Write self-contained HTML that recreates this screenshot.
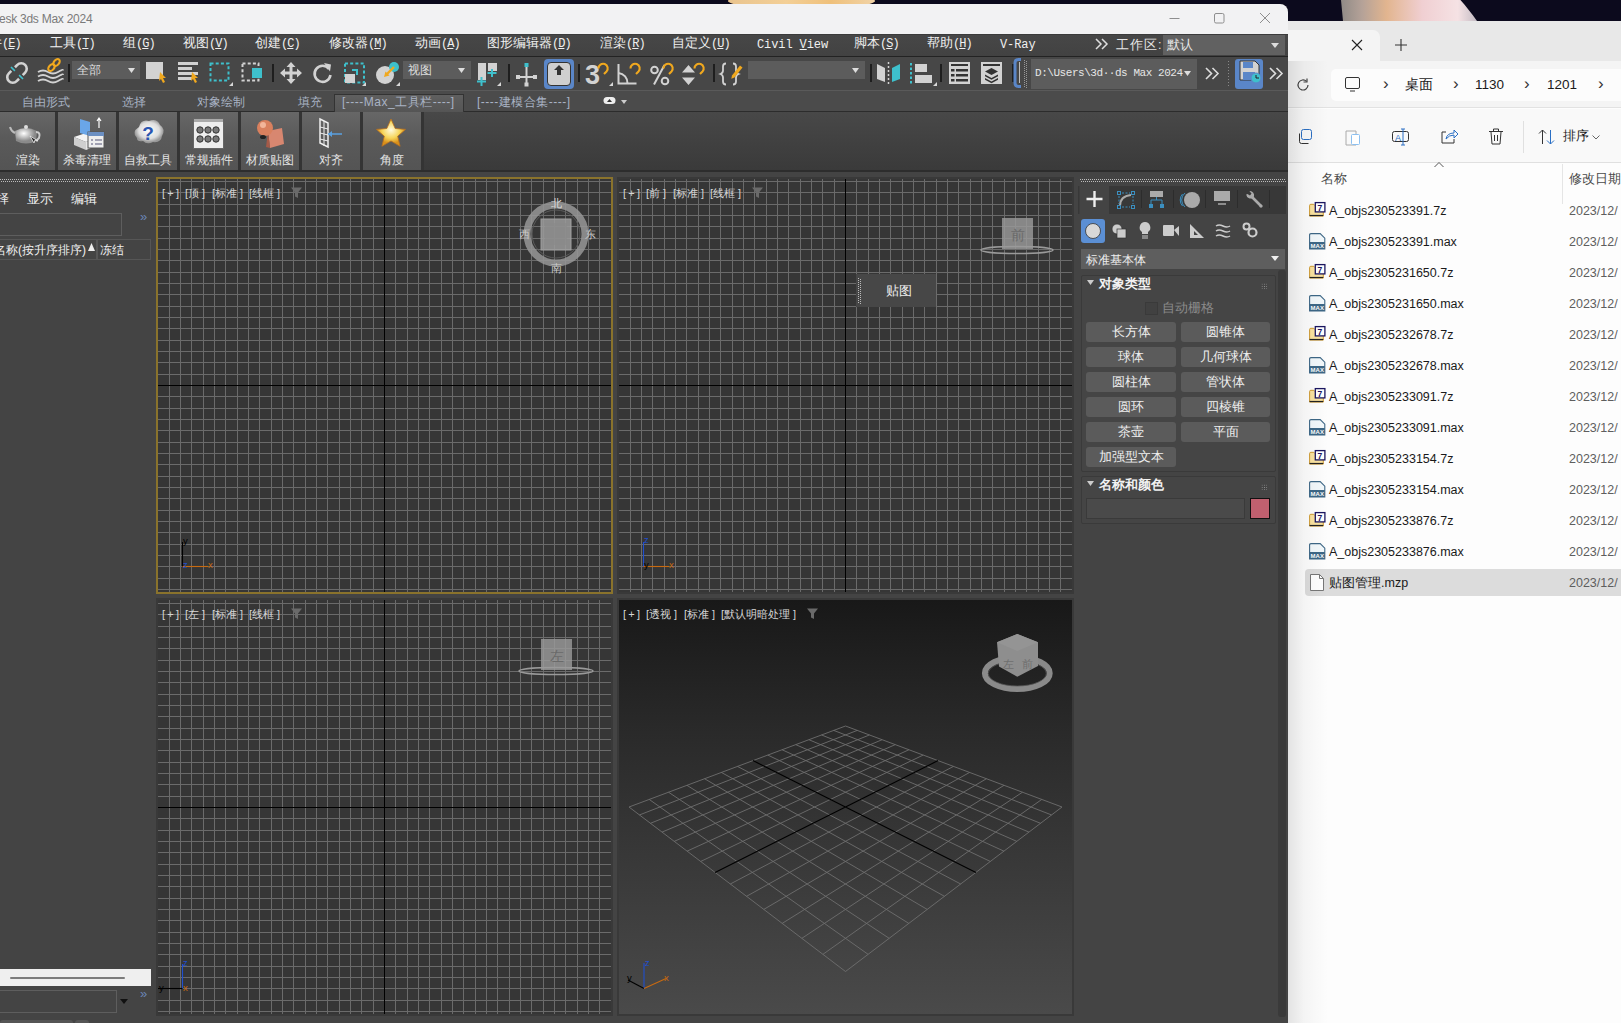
<!DOCTYPE html><html><head><meta charset="utf-8"><style>
*{box-sizing:border-box}
html,body{margin:0;padding:0}
body{width:1621px;height:1023px;overflow:hidden;position:relative;background:#0c0a1d;font-family:"Liberation Sans",sans-serif;font-size:12px;color:#ddd}
.a{position:absolute}
.mono{font-family:"Liberation Mono",monospace}
.t{position:absolute;white-space:nowrap;line-height:1}
svg{position:absolute;overflow:visible}
</style></head><body><div class="a" style="left:728px;top:-6px;width:147px;height:14px;border-radius:50%/60%;background:linear-gradient(90deg,#e9c48e,#f3cf96 40%,#efc07a 70%,#f1d3a6)"></div>
<svg style="left:1330px;top:-40px" width="170" height="62"><defs><linearGradient id="pl" x1="0" x2="1"><stop offset="0" stop-color="#8f8a86"/><stop offset="0.16" stop-color="#b5a298"/><stop offset="0.34" stop-color="#e2b58f"/><stop offset="0.6" stop-color="#f0cfd2"/><stop offset="0.86" stop-color="#f5e2e4"/><stop offset="1" stop-color="#c4bcc4"/></linearGradient></defs><path d="M11 40 C 8 25, 14 10, 40 2 C 70 -6, 110 8, 147 61 L 13 61 Z" fill="url(#pl)"/></svg>
<div class="a" style="left:0;top:4px;width:1288px;height:1019px;background:#444;border-top-right-radius:8px;overflow:hidden">
<div class="a" style="left:0;top:0;width:1288px;height:30px;background:#f2f2f3"></div>
<div class="t" style="left:-1px;top:9px;font-size:12px;letter-spacing:-0.25px;color:#7a7a7a">esk 3ds Max 2024</div>
<svg style="left:1160px;top:0" width="128" height="30" fill="none" stroke="#8e8e8e" stroke-width="1"><path d="M9.5 14.5h10"/><rect x="54.5" y="9.5" width="9.5" height="9.5" rx="1.5"/><path d="M100 9l10 10M110 9l-10 10"/></svg>
<div class="a" style="left:0;top:30px;width:1288px;height:22px;background:linear-gradient(#474747,#424242);border-top:1px solid #3b3b3b"></div>
<div class="a" style="left:0;top:52px;width:1288px;height:1px;background:#232323"></div>
<div class="t" style="left:-11px;top:32px;color:#f0f0f0;white-space:nowrap"><span style="font-size:13px">件</span><span class="mono" style="font-size:12px;letter-spacing:-1px">(<u style="text-underline-offset:1px">E</u>)</span></div>
<div class="t" style="left:50px;top:32px;color:#f0f0f0;white-space:nowrap"><span style="font-size:13px">工具</span><span class="mono" style="font-size:12px;letter-spacing:-1px">(<u style="text-underline-offset:1px">T</u>)</span></div>
<div class="t" style="left:123px;top:32px;color:#f0f0f0;white-space:nowrap"><span style="font-size:13px">组</span><span class="mono" style="font-size:12px;letter-spacing:-1px">(<u style="text-underline-offset:1px">G</u>)</span></div>
<div class="t" style="left:183px;top:32px;color:#f0f0f0;white-space:nowrap"><span style="font-size:13px">视图</span><span class="mono" style="font-size:12px;letter-spacing:-1px">(<u style="text-underline-offset:1px">V</u>)</span></div>
<div class="t" style="left:255px;top:32px;color:#f0f0f0;white-space:nowrap"><span style="font-size:13px">创建</span><span class="mono" style="font-size:12px;letter-spacing:-1px">(<u style="text-underline-offset:1px">C</u>)</span></div>
<div class="t" style="left:329px;top:32px;color:#f0f0f0;white-space:nowrap"><span style="font-size:13px">修改器</span><span class="mono" style="font-size:12px;letter-spacing:-1px">(<u style="text-underline-offset:1px">M</u>)</span></div>
<div class="t" style="left:415px;top:32px;color:#f0f0f0;white-space:nowrap"><span style="font-size:13px">动画</span><span class="mono" style="font-size:12px;letter-spacing:-1px">(<u style="text-underline-offset:1px">A</u>)</span></div>
<div class="t" style="left:487px;top:32px;color:#f0f0f0;white-space:nowrap"><span style="font-size:13px">图形编辑器</span><span class="mono" style="font-size:12px;letter-spacing:-1px">(<u style="text-underline-offset:1px">D</u>)</span></div>
<div class="t" style="left:600px;top:32px;color:#f0f0f0;white-space:nowrap"><span style="font-size:13px">渲染</span><span class="mono" style="font-size:12px;letter-spacing:-1px">(<u style="text-underline-offset:1px">R</u>)</span></div>
<div class="t" style="left:672px;top:32px;color:#f0f0f0;white-space:nowrap"><span style="font-size:13px">自定义</span><span class="mono" style="font-size:12px;letter-spacing:-1px">(<u style="text-underline-offset:1px">U</u>)</span></div>
<div class="t mono" style="left:757px;top:35px;font-size:12px;color:#f0f0f0;letter-spacing:-0.1px">Civil <u style="text-underline-offset:1px">V</u>iew</div>
<div class="t" style="left:854px;top:32px;color:#f0f0f0;white-space:nowrap"><span style="font-size:13px">脚本</span><span class="mono" style="font-size:12px;letter-spacing:-1px">(<u style="text-underline-offset:1px">S</u>)</span></div>
<div class="t" style="left:927px;top:32px;color:#f0f0f0;white-space:nowrap"><span style="font-size:13px">帮助</span><span class="mono" style="font-size:12px;letter-spacing:-1px">(<u style="text-underline-offset:1px">H</u>)</span></div>
<div class="t mono" style="left:1000px;top:35px;font-size:12px;color:#f0f0f0;letter-spacing:-0.1px">V-Ray</div>
<svg style="left:1095px;top:34px" width="13" height="12" ><path d="M1 1l5 5-5 5M7 1l5 5-5 5" fill="none" stroke="#ddd" stroke-width="1.5"/></svg>
<div class="t" style="left:1116px;top:35px;font-size:12.5px;letter-spacing:1px;color:#e6e6e6">工作区:</div>
<div class="a" style="left:1163px;top:31px;width:122px;height:20px;background:#616161"></div>
<div class="t" style="left:1167px;top:35px;font-size:12.5px;color:#e6e6e6">默认</div>
<svg style="left:1271px;top:39px" width="8" height="5"><path d="M0 0h8L4 5z" fill="#ddd"/></svg>
<div class="a" style="left:0;top:53px;width:1288px;height:34px;background:#474747"></div>
<div class="a" style="left:0;top:86px;width:1288px;height:1px;background:#5a5a5a"></div>
<svg style="left:0px;top:51px" width="40" height="36" ><g transform="translate(17,18) rotate(-45)" fill="none" stroke-linecap="butt"><path d="M2.6 -5.5H6A5.5 5.5 0 0 1 6 5.5H2.6M-2.6 5.5H-6A5.5 5.5 0 0 1 -6 -5.5H-2.6" stroke="#d2d2d2" stroke-width="2.6"/><path d="M0 -8.5V-3M0 3V8.5" stroke="#3ec0cc" stroke-width="1.6"/></g></svg>
<svg style="left:30px;top:51px" width="40" height="36" ><g fill="none" stroke="#d2d2d2" stroke-width="1.9"><path d="M8 17q5-3 10 0t10 0 5-1.5"/><path d="M8 21.5q5-3 10 0t10 0 5-1.5"/><path d="M8 26q5-3 10 0t10 0 5-1.5"/></g><g fill="none" stroke="#f0a81e" stroke-width="2.1"><ellipse cx="21.5" cy="12.5" rx="4" ry="2.6" transform="rotate(-50 21.5 12.5)"/><ellipse cx="26.5" cy="7.5" rx="4" ry="2.6" transform="rotate(-50 26.5 7.5)"/></g></svg>
<div class="a" style="left:68px;top:60px;width:2px;height:18px;background:#1e1e1e"></div>
<div class="a" style="left:72px;top:57px;width:68px;height:18px;background:#5c5c5c"></div>
<div class="t" style="left:77px;top:60.0px;font-size:12px;color:#dcdcdc">全部</div>
<svg style="left:128px;top:64px" width="8" height="5" ><path d="M0 0h7L3.5 5z" fill="#ddd"/></svg>
<svg style="left:146px;top:58px" width="22" height="22" ><rect x="0" y="0" width="17" height="17" fill="#d2d2d2"/><path d="M14 10l6 6-3 0 2 4-2 1-2-4-2 2z" fill="#f0a81e"/></svg>
<svg style="left:178px;top:58px" width="24" height="22" ><g fill="#d2d2d2"><rect x="0" y="0" width="20" height="3"/><rect x="0" y="5" width="14" height="3"/><rect x="0" y="10" width="20" height="3"/><rect x="0" y="15" width="14" height="3"/></g><path d="M14 10l6 6-3 0 2 4-2 1-2-4-2 2z" fill="#f0a81e"/></svg>
<svg style="left:208px;top:57px" width="26" height="26" ><rect x="2.5" y="2.5" width="18" height="17" fill="none" stroke="#3ec0cc" stroke-width="2" stroke-dasharray="3 2.2"/></svg>
<svg style="left:229px;top:78px" width="4" height="4" ><path d="M4 0v4h-4z" fill="#d8d8d8"/></svg>
<svg style="left:240px;top:57px" width="26" height="26" ><rect x="2.5" y="2.5" width="16" height="17" fill="none" stroke="#d2d2d2" stroke-width="2" stroke-dasharray="3 2.2"/><rect x="12" y="7" width="10" height="10" fill="#3ec0cc"/></svg>
<div class="a" style="left:272px;top:60px;width:2px;height:18px;background:#1e1e1e"></div>
<svg style="left:279px;top:57px" width="24" height="24" ><g fill="#d2d2d2"><path d="M12 1l4.5 5h-3v4.5h4.5v-3l5 4.5-5 4.5v-3h-4.5v4.5h3l-4.5 5-4.5-5h3v-4.5h-4.5v3l-5-4.5 5-4.5v3h4.5v-4.5h-3z"/></g></svg>
<svg style="left:312px;top:57px" width="22" height="24" ><path d="M17 8a8 8 0 1 0 1.5 6" fill="none" stroke="#d2d2d2" stroke-width="2.6"/><path d="M12 2l7 1.5-1 7z" fill="#d2d2d2"/></svg>
<svg style="left:342px;top:57px" width="26" height="26" ><rect x="3" y="2.5" width="19" height="19" fill="none" stroke="#3ec0cc" stroke-width="2" stroke-dasharray="3 2.2"/><rect x="3" y="13" width="10" height="9" fill="#d2d2d2"/><path d="M10 9h5v5" fill="none" stroke="#3ec0cc" stroke-width="2"/></svg>
<svg style="left:362px;top:78px" width="4" height="4" ><path d="M4 0v4h-4z" fill="#d8d8d8"/></svg>
<svg style="left:375px;top:57px" width="26" height="26" ><circle cx="10" cy="14" r="9" fill="#d2d2d2"/><circle cx="19" cy="6" r="5" fill="#3ec0cc"/><path d="M19 6l-8 8" stroke="#f0a81e" stroke-width="2.4"/><path d="M9 16l1.5-5.5 4 4z" fill="#f0a81e"/></svg>
<svg style="left:396px;top:78px" width="4" height="4" ><path d="M4 0v4h-4z" fill="#d8d8d8"/></svg>
<div class="a" style="left:403px;top:57px;width:68px;height:18px;background:#5c5c5c"></div>
<div class="t" style="left:408px;top:60.0px;font-size:12px;color:#dcdcdc">视图</div>
<svg style="left:458px;top:64px" width="8" height="5" ><path d="M0 0h7L3.5 5z" fill="#ddd"/></svg>
<svg style="left:477px;top:57px" width="26" height="26" ><rect x="1" y="2" width="8" height="17" fill="#d2d2d2"/><rect x="11" y="2" width="9" height="8" fill="#d2d2d2"/><path d="M4.5 16v9M0 20.5h9M15 8v8M10.5 12h9" stroke="#3ec0cc" stroke-width="2"/></svg>
<svg style="left:497px;top:78px" width="4" height="4" ><path d="M4 0v4h-4z" fill="#d8d8d8"/></svg>
<div class="a" style="left:508px;top:60px;width:2px;height:18px;background:#1e1e1e"></div>
<svg style="left:515px;top:57px" width="24" height="26" ><path d="M11.5 4v20M2 16h19" stroke="#d2d2d2" stroke-width="2"/><rect x="9.5" y="2" width="4" height="4" fill="#3ec0cc"/><rect x="1" y="14" width="4" height="4" fill="#d2d2d2"/><rect x="18" y="14" width="4" height="4" fill="#d2d2d2"/><rect x="9.5" y="21.5" width="4" height="4" fill="#d2d2d2"/></svg>
<div class="a" style="left:544px;top:55px;width:30px;height:30px;border-radius:4px;background:#5a86c8"></div>
<div class="a" style="left:547px;top:58px;width:24px;height:24px;border-radius:4px;background:#cfcfcf;border:1px solid #333"></div>
<svg style="left:553px;top:61px" width="12" height="12" ><path d="M6 0l5 5h-3v5h-4v-5h-3z" fill="#333"/></svg>
<div class="a" style="left:578px;top:60px;width:2px;height:18px;background:#1e1e1e"></div>
<svg style="left:580px;top:54px" width="24" height="30" ><text x="5" y="25.5" font-family="Liberation Sans" font-weight="bold" font-size="27" fill="#d2d2d2">3</text></svg>
<svg style="left:596px;top:57px" width="14" height="14" ><path d="M2.5 7.5A4.6 4.6 0 1 1 10.5 10.5L8 13" fill="none" stroke="#f0a81e" stroke-width="2.1" stroke-linecap="butt"/></svg>
<svg style="left:609px;top:78px" width="4" height="4" ><path d="M4 0v4h-4z" fill="#d8d8d8"/></svg>
<svg style="left:616px;top:57px" width="24" height="26" ><path d="M2.5 3v19.5h18" fill="none" stroke="#d2d2d2" stroke-width="2"/><path d="M2.5 12a10 10 0 0 1 9 10.5" fill="none" stroke="#d2d2d2" stroke-width="2"/></svg>
<svg style="left:628px;top:57px" width="14" height="14" ><path d="M2.5 7.5A4.6 4.6 0 1 1 10.5 10.5L8 13" fill="none" stroke="#f0a81e" stroke-width="2.1" stroke-linecap="butt"/></svg>
<svg style="left:649px;top:57px" width="26" height="26" ><circle cx="5.5" cy="9" r="3.3" fill="none" stroke="#d2d2d2" stroke-width="2"/><circle cx="16" cy="20" r="3.3" fill="none" stroke="#d2d2d2" stroke-width="2"/><path d="M5 23.5L15.5 4" stroke="#d2d2d2" stroke-width="2"/></svg>
<svg style="left:661px;top:57px" width="14" height="14" ><path d="M2.5 7.5A4.6 4.6 0 1 1 10.5 10.5L8 13" fill="none" stroke="#f0a81e" stroke-width="2.1" stroke-linecap="butt"/></svg>
<svg style="left:681px;top:59px" width="16" height="24" ><path d="M7.5 2l6.5 7.5h-13zM7.5 22l6.5-7.5h-13z" fill="#d2d2d2"/></svg>
<svg style="left:692px;top:57px" width="14" height="14" ><path d="M2.5 7.5A4.6 4.6 0 1 1 10.5 10.5L8 13" fill="none" stroke="#f0a81e" stroke-width="2.1" stroke-linecap="butt"/></svg>
<div class="a" style="left:713px;top:60px;width:2px;height:18px;background:#1e1e1e"></div>
<svg style="left:719px;top:57px" width="28" height="26" ><path d="M7 2.5q-3 0-3 3v4q0 2.5-2.5 3.5 2.5 1 2.5 3.5v4q0 3 3 3M14 2.5q3 0 3 3v4q0 2.5 2.5 3.5-2.5 1-2.5 3.5v4q0 3-3 3" fill="none" stroke="#d2d2d2" stroke-width="1.8"/><path d="M13 14.5L21 4.5l2.5 2L15.5 16.5l-3.2 1.3z" fill="#f0a81e"/></svg>
<div class="a" style="left:748px;top:57px;width:117px;height:18px;background:#5c5c5c"></div>
<svg style="left:852px;top:64px" width="8" height="5" ><path d="M0 0h7L3.5 5z" fill="#ddd"/></svg>
<div class="a" style="left:870px;top:60px;width:2px;height:18px;background:#1e1e1e"></div>
<svg style="left:876px;top:58px" width="26" height="22" ><path d="M1 2l8 4v14l-8-3z" fill="#d2d2d2"/><path d="M24 2l-8 4v14l8-3z" fill="#3ec0cc"/><path d="M12.5 0v22" stroke="#d2d2d2" stroke-width="1.5" stroke-dasharray="2 2"/></svg>
<svg style="left:910px;top:58px" width="26" height="26" ><path d="M1 1v22" stroke="#3ec0cc" stroke-width="2" stroke-dasharray="2.5 2"/><rect x="5" y="2" width="12" height="8" fill="#d2d2d2"/><rect x="5" y="13" width="17" height="8" fill="#d2d2d2"/></svg>
<svg style="left:933px;top:78px" width="4" height="4" ><path d="M4 0v4h-4z" fill="#d8d8d8"/></svg>
<div class="a" style="left:940px;top:60px;width:2px;height:18px;background:#1e1e1e"></div>
<svg style="left:948px;top:57px" width="24" height="26" ><rect x="1" y="1" width="21" height="22" fill="#d2d2d2"/><g fill="#333"><rect x="3" y="3" width="17" height="2"/><rect x="3" y="8" width="3.5" height="2.5"/><rect x="8" y="8" width="12" height="2.5"/><rect x="3" y="13" width="3.5" height="2.5"/><rect x="8" y="13" width="12" height="2.5"/><rect x="3" y="18" width="3.5" height="2.5"/><rect x="8" y="18" width="12" height="2.5"/></g></svg>
<svg style="left:980px;top:57px" width="24" height="26" ><rect x="1" y="1" width="21" height="22" fill="#d2d2d2"/><g fill="#333"><rect x="3" y="3" width="17" height="2"/><path d="M11.5 7l6.5 3.5-6.5 3.5-6.5-3.5z"/><path d="M5 13.5l6.5 3.5 6.5-3.5v1.8l-6.5 3.5-6.5-3.5z"/><path d="M5 17l6.5 3.5 6.5-3.5v1.8l-6.5 3.5-6.5-3.5z"/></g></svg>
<div class="a" style="left:1012px;top:60px;width:2px;height:18px;background:#1e1e1e"></div>
<svg style="left:1013px;top:54px" width="10" height="32" ><path d="M8 1.5H5.5Q2 1.5 2 5v20q0 3.5 3.5 3.5H8" fill="none" stroke="#5a86c8" stroke-width="3"/><path d="M6.5 4v21" stroke="#ddd" stroke-width="0.8"/></svg>
<div class="a" style="left:1024px;top:56px;width:1px;height:28px;background-image:linear-gradient(#999 1px,transparent 1px);background-size:1px 2px"></div>
<div class="a" style="left:1026px;top:57px;width:1px;height:28px;background-image:linear-gradient(#999 1px,transparent 1px);background-size:1px 2px"></div>
<div class="a" style="left:1031px;top:55px;width:166px;height:30px;background:#5c5c5c"></div>
<div class="t mono" style="left:1035px;top:64px;font-size:11px;color:#e6e6e6;letter-spacing:-0.45px">D:\Users\3d&#183;&#183;ds Max 2024</div>
<svg style="left:1184px;top:67px" width="8" height="5" ><path d="M0 0h7L3.5 5z" fill="#ddd"/></svg>
<svg style="left:1205px;top:63px" width="14" height="13" ><path d="M1 1l5.5 5.5-5.5 5.5M7.5 1l5.5 5.5-5.5 5.5" fill="none" stroke="#ddd" stroke-width="1.6"/></svg>
<div class="a" style="left:1227px;top:56px;width:3px;height:28px;background-image:radial-gradient(#888 0.6px,transparent 0.7px);background-size:3px 3px"></div>
<div class="a" style="left:1235px;top:55px;width:28px;height:30px;border-radius:3px;background:#5a86c8"></div>
<svg style="left:1239px;top:56px" width="22" height="24" ><path d="M1 1h15l4 4v15h-19z" fill="#d2d2d2" stroke="#333" stroke-width="1"/><rect x="4" y="2" width="10" height="6" fill="#5a86c8"/><rect x="4" y="12" width="12" height="8" fill="#5a86c8"/><circle cx="17" cy="18" r="5" fill="#3ec0cc" stroke="#5a86c8"/><path d="M17 15v3h3" stroke="#222" fill="none"/></svg>
<svg style="left:1269px;top:63px" width="14" height="13" ><path d="M1 1l5.5 5.5-5.5 5.5M7.5 1l5.5 5.5-5.5 5.5" fill="none" stroke="#ddd" stroke-width="1.6"/></svg>
<div class="a" style="left:0;top:87px;width:1288px;height:20px;background:#4b4b4b"></div>
<div class="a" style="left:0;top:107px;width:1288px;height:1px;background:#2c2c2c"></div>
<div class="t" style="left:22px;top:92px;font-size:12px;color:#a9b3c4">自由形式</div>
<div class="t" style="left:122px;top:92px;font-size:12px;color:#a9b3c4">选择</div>
<div class="t" style="left:197px;top:92px;font-size:12px;color:#a9b3c4">对象绘制</div>
<div class="t" style="left:298px;top:92px;font-size:12px;color:#a9b3c4">填充</div>
<div class="a" style="left:334px;top:90px;width:130px;height:18px;background:linear-gradient(#5f5f5f,#555);border:1px solid #333;border-bottom:none"></div>
<div class="t" style="left:342px;top:92px;font-size:12px;letter-spacing:0.5px;color:#a9b3c4">[----Max_工具栏----]</div>
<div class="t" style="left:477px;top:92px;font-size:12px;letter-spacing:0.5px;color:#a9b3c4">[----建模合集----]</div>
<svg style="left:603px;top:92px" width="14" height="10" ><rect x="0.5" y="1" width="12" height="7" rx="3.5" fill="#eee"/><path d="M4 6l2.5-3 2.5 3z" fill="#333"/></svg>
<svg style="left:621px;top:96px" width="6" height="4" ><path d="M0 0h6L3 4z" fill="#ccc"/></svg>
<div class="a" style="left:0;top:108px;width:1288px;height:58px;background:linear-gradient(#484848,#3a3a3a)"></div>
<div class="a" style="left:0;top:108px;width:424px;height:58px;background:#343434"></div>
<div class="a" style="left:0;top:166px;width:1288px;height:2px;background:#2d2d2d"></div>
<div class="a" style="left:0px;top:108px;width:55px;height:58px;background:linear-gradient(#676767,#5a5a5a 45%,#545454)"></div>
<div class="t" style="left:0px;width:55px;text-align:center;top:150px;font-size:12px;color:#e4e4e4">渲染</div>
<div class="a" style="left:58px;top:108px;width:58px;height:58px;background:linear-gradient(#676767,#5a5a5a 45%,#545454)"></div>
<div class="t" style="left:58px;width:58px;text-align:center;top:150px;font-size:12px;color:#e4e4e4">杀毒清理</div>
<div class="a" style="left:119px;top:108px;width:58px;height:58px;background:linear-gradient(#676767,#5a5a5a 45%,#545454)"></div>
<div class="t" style="left:119px;width:58px;text-align:center;top:150px;font-size:12px;color:#e4e4e4">自救工具</div>
<div class="a" style="left:180px;top:108px;width:58px;height:58px;background:linear-gradient(#676767,#5a5a5a 45%,#545454)"></div>
<div class="t" style="left:180px;width:58px;text-align:center;top:150px;font-size:12px;color:#e4e4e4">常规插件</div>
<div class="a" style="left:241px;top:108px;width:58px;height:58px;background:linear-gradient(#676767,#5a5a5a 45%,#545454)"></div>
<div class="t" style="left:241px;width:58px;text-align:center;top:150px;font-size:12px;color:#e4e4e4">材质贴图</div>
<div class="a" style="left:302px;top:108px;width:58px;height:58px;background:linear-gradient(#676767,#5a5a5a 45%,#545454)"></div>
<div class="t" style="left:302px;width:58px;text-align:center;top:150px;font-size:12px;color:#e4e4e4">对齐</div>
<div class="a" style="left:363px;top:108px;width:58px;height:58px;background:linear-gradient(#676767,#5a5a5a 45%,#545454)"></div>
<div class="t" style="left:363px;width:58px;text-align:center;top:150px;font-size:12px;color:#e4e4e4">角度</div>
<svg style="left:10px;top:115px" width="32" height="30" ><defs><radialGradient id="tp" cx="0.4" cy="0.35"><stop offset="0" stop-color="#fff"/><stop offset="1" stop-color="#8a8a8a"/></radialGradient></defs><path d="M5 12q11-6 22 0l-1 10q-10 5-20 0z" fill="url(#tp)"/><path d="M26 13q5 0 3 6l-3 3" fill="none" stroke="#ccc" stroke-width="2"/><path d="M5 14q-4-2-5-6" stroke="#bbb" stroke-width="2" fill="none"/><circle cx="16" cy="8" r="2" fill="#ddd"/><path d="M20 17l4 7 1-3 3 1z" fill="#222" stroke="#eee" stroke-width="0.8"/></svg>
<svg style="left:71px;top:113px" width="34" height="34" ><path d="M3 20l12-4 12 4-12 5z" fill="#f4f4f4"/><path d="M3 20v8l12 5v-8z" fill="#cfcfcf"/><path d="M15 25v8l12-5v-8z" fill="#e6e6e6"/><path d="M9 2l10 3v14l-10-3z" fill="#6aa6e8"/><rect x="17" y="15" width="16" height="16" fill="#eee" stroke="#555"/><rect x="17" y="15" width="16" height="4" fill="#6b8fc2"/><path d="M20 23h2M24 23h7M20 27h2M24 27h7" stroke="#557"/><path d="M28 2v9M26 4l2-3 2 3" stroke="#fff" stroke-width="1.2" fill="none"/></svg>
<svg style="left:131px;top:114px" width="34" height="30" ><defs><radialGradient id="cl" cx="0.5" cy="0.45"><stop offset="0" stop-color="#fff"/><stop offset="0.7" stop-color="#ddd"/><stop offset="1" stop-color="#999"/></radialGradient></defs><path d="M6 20q-6-6 2-11q2-8 10-6q8-3 11 4q6 4 2 11q-1 7-9 6q-6 3-10-1q-6 1-6-3z" fill="url(#cl)"/><text x="17" y="22" text-anchor="middle" font-family="Liberation Sans" font-weight="bold" font-size="19" fill="#2a55b0">?</text></svg>
<svg style="left:193px;top:114px" width="32" height="32" ><rect x="0.5" y="0.5" width="30" height="30" fill="#eee" stroke="#666"/><rect x="1" y="1" width="29" height="3" fill="#aaa"/><circle cx="7" cy="12" r="3.2" fill="#777" stroke="#333"/><circle cx="7" cy="21" r="3.2" fill="#777" stroke="#333"/><circle cx="15" cy="12" r="3.2" fill="#777" stroke="#333"/><circle cx="15" cy="21" r="3.2" fill="#777" stroke="#333"/><circle cx="23" cy="12" r="3.2" fill="#777" stroke="#333"/><circle cx="23" cy="21" r="3.2" fill="#777" stroke="#333"/></svg>
<svg style="left:253px;top:113px" width="34" height="34" ><path d="M15 14l14-3 2 16-14 4z" fill="#d88770"/><path d="M15 14l-2 16 4 1z" fill="#a55a48"/><circle cx="12" cy="11" r="8" fill="#d9805e"/><circle cx="10" cy="8" r="3" fill="#f2b59a"/><ellipse cx="10" cy="20" rx="3" ry="2" fill="#222"/></svg>
<svg style="left:317px;top:114px" width="30" height="30" ><path d="M3 1l8 4v24l-8-4z" fill="none" stroke="#eee" stroke-width="1.5"/><path d="M3 9l8 2M3 15l8 2M3 21l8 2M7 3v25" stroke="#eee" stroke-width="1"/><path d="M11 16h14" stroke="#5aa0e0" stroke-width="1.5"/><path d="M11 16l4-3v6z" fill="#5aa0e0"/></svg>
<svg style="left:376px;top:114px" width="30" height="30" ><defs><radialGradient id="st" cx="0.5" cy="0.4"><stop offset="0" stop-color="#fffbe0"/><stop offset="0.6" stop-color="#f6d55a"/><stop offset="1" stop-color="#d9901a"/></radialGradient></defs><path d="M15 1l4.2 9.5 10.3 0.9-7.8 6.8 2.4 10.1L15 23l-9.1 5.3 2.4-10.1L0.5 11.4l10.3-0.9z" fill="url(#st)" stroke="#b87020" stroke-width="0.8"/></svg>
<div class="a" style="left:0;top:175px;width:149px;height:1px;background-image:linear-gradient(90deg,#bdbdbd 1px,transparent 1px);background-size:2px 1px"></div>
<div class="a" style="left:1px;top:177px;width:148px;height:1px;background-image:linear-gradient(90deg,#bdbdbd 1px,transparent 1px);background-size:2px 1px"></div>
<div class="t" style="left:-17px;top:189px;font-size:12.5px;color:#f0f0f0">选择</div>
<div class="t" style="left:27px;top:189px;font-size:12.5px;color:#f0f0f0">显示</div>
<div class="t" style="left:71px;top:189px;font-size:12.5px;color:#f0f0f0">编辑</div>
<div class="a" style="left:-1px;top:209px;width:123px;height:23px;border:1px solid #5e5e5e"></div>
<div class="t" style="left:140px;top:206px;font-size:13px;color:#6b86b5">&#187;</div>
<div class="a" style="left:-1px;top:235px;width:98px;height:21px;border:1px solid #565656"></div>
<div class="a" style="left:97px;top:235px;width:54px;height:21px;border:1px solid #565656"></div>
<div class="t" style="left:-6px;top:240px;font-size:12px;color:#f0f0f0">名称(按升序排序)</div>
<svg style="left:88px;top:239px" width="7" height="8" ><path d="M3.5 0l3.5 8h-7z" fill="#eee"/></svg>
<div class="t" style="left:100px;top:240px;font-size:12px;color:#f0f0f0">冻结</div>
<div class="a" style="left:0;top:965px;width:151px;height:17px;background:#efefef"></div>
<div class="a" style="left:10px;top:973px;width:115px;height:2px;background:#7c7c7c;border-radius:1px"></div>
<div class="a" style="left:-1px;top:986px;width:118px;height:23px;border:1px solid #5e5e5e"></div>
<svg style="left:120px;top:995px" width="8" height="5" ><path d="M0 0h8L4 5z" fill="#111"/></svg>
<div class="t" style="left:140px;top:983px;font-size:13px;color:#6b86b5">&#187;</div>
<div class="a" style="left:0;top:1016px;width:73px;height:6px;border-radius:3px;background:#555"></div>
<div class="a" style="left:75px;top:1016px;width:14px;height:6px;border-radius:3px;background:#555"></div>
<div class="a" style="left:156px;top:173px;width:457px;height:417px;border:2px solid #8a732c;background:#363636"></div>
<svg style="left:158px;top:175px" width="453" height="413"><path d="M11.5 0V413M22.5 0V413M0 2.5H453M33.5 0V413M0 13.5H453M45.5 0V413M0 25.5H453M56.5 0V413M0 36.5H453M67.5 0V413M0 47.5H453M79.5 0V413M0 59.5H453M90.5 0V413M0 70.5H453M101.5 0V413M0 81.5H453M113.5 0V413M0 93.5H453M124.5 0V413M0 104.5H453M135.5 0V413M0 115.5H453M147.5 0V413M0 127.5H453M158.5 0V413M0 138.5H453M169.5 0V413M0 149.5H453M181.5 0V413M0 161.5H453M192.5 0V413M0 172.5H453M203.5 0V413M0 183.5H453M215.5 0V413M0 195.5H453M237.5 0V413M0 217.5H453M249.5 0V413M0 229.5H453M260.5 0V413M0 240.5H453M271.5 0V413M0 251.5H453M283.5 0V413M0 263.5H453M294.5 0V413M0 274.5H453M305.5 0V413M0 285.5H453M317.5 0V413M0 297.5H453M328.5 0V413M0 308.5H453M339.5 0V413M0 319.5H453M351.5 0V413M0 331.5H453M362.5 0V413M0 342.5H453M373.5 0V413M0 353.5H453M385.5 0V413M0 365.5H453M396.5 0V413M0 376.5H453M407.5 0V413M0 387.5H453M419.5 0V413M0 399.5H453M430.5 0V413M0 410.5H453M441.5 0V413" stroke="#6b6b6b" stroke-width="1" shape-rendering="crispEdges"/><path d="M226.5 0V413M0 206.5H453" stroke="#000" stroke-width="1" shape-rendering="crispEdges"/></svg>
<div class="a" style="left:617px;top:173px;width:457px;height:417px;border:2px solid #393939;background:#363636"></div>
<svg style="left:619px;top:175px" width="453" height="413"><path d="M11.5 0V413M22.5 0V413M0 2.5H453M33.5 0V413M0 13.5H453M45.5 0V413M0 25.5H453M56.5 0V413M0 36.5H453M67.5 0V413M0 47.5H453M79.5 0V413M0 59.5H453M90.5 0V413M0 70.5H453M101.5 0V413M0 81.5H453M113.5 0V413M0 93.5H453M124.5 0V413M0 104.5H453M135.5 0V413M0 115.5H453M147.5 0V413M0 127.5H453M158.5 0V413M0 138.5H453M169.5 0V413M0 149.5H453M181.5 0V413M0 161.5H453M192.5 0V413M0 172.5H453M203.5 0V413M0 183.5H453M215.5 0V413M0 195.5H453M237.5 0V413M0 217.5H453M249.5 0V413M0 229.5H453M260.5 0V413M0 240.5H453M271.5 0V413M0 251.5H453M283.5 0V413M0 263.5H453M294.5 0V413M0 274.5H453M305.5 0V413M0 285.5H453M317.5 0V413M0 297.5H453M328.5 0V413M0 308.5H453M339.5 0V413M0 319.5H453M351.5 0V413M0 331.5H453M362.5 0V413M0 342.5H453M373.5 0V413M0 353.5H453M385.5 0V413M0 365.5H453M396.5 0V413M0 376.5H453M407.5 0V413M0 387.5H453M419.5 0V413M0 399.5H453M430.5 0V413M0 410.5H453M441.5 0V413" stroke="#6b6b6b" stroke-width="1" shape-rendering="crispEdges"/><path d="M226.5 0V413M0 206.5H453" stroke="#000" stroke-width="1" shape-rendering="crispEdges"/></svg>
<div class="a" style="left:156px;top:594px;width:457px;height:418px;border:2px solid #393939;background:#363636"></div>
<svg style="left:158px;top:596px" width="453" height="414"><path d="M11.5 0V414M22.5 0V414M0 3.5H453M33.5 0V414M0 14.5H453M45.5 0V414M0 26.5H453M56.5 0V414M0 37.5H453M67.5 0V414M0 48.5H453M79.5 0V414M0 60.5H453M90.5 0V414M0 71.5H453M101.5 0V414M0 82.5H453M113.5 0V414M0 94.5H453M124.5 0V414M0 105.5H453M135.5 0V414M0 116.5H453M147.5 0V414M0 128.5H453M158.5 0V414M0 139.5H453M169.5 0V414M0 150.5H453M181.5 0V414M0 162.5H453M192.5 0V414M0 173.5H453M203.5 0V414M0 184.5H453M215.5 0V414M0 196.5H453M237.5 0V414M0 218.5H453M249.5 0V414M0 230.5H453M260.5 0V414M0 241.5H453M271.5 0V414M0 252.5H453M283.5 0V414M0 264.5H453M294.5 0V414M0 275.5H453M305.5 0V414M0 286.5H453M317.5 0V414M0 298.5H453M328.5 0V414M0 309.5H453M339.5 0V414M0 320.5H453M351.5 0V414M0 332.5H453M362.5 0V414M0 343.5H453M373.5 0V414M0 354.5H453M385.5 0V414M0 366.5H453M396.5 0V414M0 377.5H453M407.5 0V414M0 388.5H453M419.5 0V414M0 400.5H453M430.5 0V414M0 411.5H453M441.5 0V414" stroke="#6b6b6b" stroke-width="1" shape-rendering="crispEdges"/><path d="M226.5 0V414M0 207.5H453" stroke="#000" stroke-width="1" shape-rendering="crispEdges"/></svg>
<div class="a" style="left:617px;top:594px;width:457px;height:418px;border:2px solid #393939;background:linear-gradient(#181818,#2a2a2a 32%,#4a4a4a 100%)"></div>
<svg style="left:617px;top:594px" width="457" height="417"><path d="M228.50 128.00L12.00 209.00M228.50 128.00L445.00 209.00M240.25 132.40L22.46 216.95M216.75 132.40L434.54 216.95M252.45 136.96L33.45 225.30M204.55 136.96L423.55 225.30M265.11 141.70L45.02 234.09M191.89 141.70L411.98 234.09M278.27 146.62L57.21 243.35M178.73 146.62L399.79 243.35M291.95 151.74L70.08 253.13M165.05 151.74L386.92 253.13M306.19 157.07L83.68 263.46M150.81 157.07L373.32 263.46M336.48 168.40L113.33 285.99M120.52 168.40L343.67 285.99M352.60 174.43L129.54 298.31M104.40 174.43L327.46 298.31M369.45 180.73L146.79 311.42M87.55 180.73L310.21 311.42M387.05 187.32L165.19 325.39M69.95 187.32L291.81 325.39M405.47 194.21L184.84 340.33M51.53 194.21L272.16 340.33M424.77 201.43L205.90 356.33M32.23 201.43L251.10 356.33M445.00 209.00L228.50 373.50M12.00 209.00L228.50 373.50" stroke="#6e6e6e" stroke-width="0.9" fill="none"/><path d="M321.02 162.61L98.07 274.40M135.98 162.61L358.93 274.40" stroke="#000" stroke-width="1.1" fill="none"/></svg>
<div class="t" style="left:162px;top:184px;font-size:11px;color:#d6d6d6">[&thinsp;+&thinsp;]</div>
<div class="t" style="left:185px;top:184px;font-size:11px;color:#d6d6d6">[顶&nbsp;]</div>
<div class="t" style="left:212px;top:184px;font-size:11px;color:#d6d6d6">[标准&nbsp;]</div>
<div class="t" style="left:249px;top:184px;font-size:11px;color:#d6d6d6">[线框&nbsp;]</div>
<svg style="left:291px;top:183px" width="12" height="12" ><path d="M0 0.5h11l-4 5v5.5l-3-1.5v-4z" fill="#6a6a6a"/></svg>
<div class="t" style="left:623px;top:184px;font-size:11px;color:#d6d6d6">[&thinsp;+&thinsp;]</div>
<div class="t" style="left:646px;top:184px;font-size:11px;color:#d6d6d6">[前&nbsp;]</div>
<div class="t" style="left:673px;top:184px;font-size:11px;color:#d6d6d6">[标准&nbsp;]</div>
<div class="t" style="left:710px;top:184px;font-size:11px;color:#d6d6d6">[线框&nbsp;]</div>
<svg style="left:752px;top:183px" width="12" height="12" ><path d="M0 0.5h11l-4 5v5.5l-3-1.5v-4z" fill="#6a6a6a"/></svg>
<div class="t" style="left:162px;top:605px;font-size:11px;color:#d6d6d6">[&thinsp;+&thinsp;]</div>
<div class="t" style="left:185px;top:605px;font-size:11px;color:#d6d6d6">[左&nbsp;]</div>
<div class="t" style="left:212px;top:605px;font-size:11px;color:#d6d6d6">[标准&nbsp;]</div>
<div class="t" style="left:249px;top:605px;font-size:11px;color:#d6d6d6">[线框&nbsp;]</div>
<svg style="left:291px;top:604px" width="12" height="12" ><path d="M0 0.5h11l-4 5v5.5l-3-1.5v-4z" fill="#6a6a6a"/></svg>
<div class="t" style="left:623px;top:605px;font-size:11px;color:#d6d6d6">[&thinsp;+&thinsp;]</div>
<div class="t" style="left:646px;top:605px;font-size:11px;color:#d6d6d6">[透视&nbsp;]</div>
<div class="t" style="left:684px;top:605px;font-size:11px;color:#d6d6d6">[标准&nbsp;]</div>
<div class="t" style="left:721px;top:605px;font-size:11px;color:#d6d6d6">[默认明暗处理&nbsp;]</div>
<svg style="left:807px;top:604px" width="12" height="12" ><path d="M0 0.5h11l-4 5v5.5l-3-1.5v-4z" fill="#6a6a6a"/></svg>
<svg style="left:520px;top:194px" width="72" height="72" ><circle cx="36" cy="36" r="29" fill="none" stroke="#969696" stroke-width="7" stroke-opacity="0.85"/><circle cx="36" cy="36" r="24" fill="none" stroke="#5a5a5a" stroke-width="1"/><rect x="21" y="21" width="30" height="31" fill="#9a9a9a" fill-opacity="0.85" stroke="#a0a0a0"/><rect x="25" y="25" width="22" height="22" fill="#8a8a8a" fill-opacity="0.7"/><text x="36" y="9" text-anchor="middle" font-size="11" fill="#ddd">北</text><text x="4" y="40" text-anchor="middle" font-size="11" fill="#ccc">西</text><text x="70" y="40" text-anchor="middle" font-size="11" fill="#ccc">东</text><text x="36" y="74" text-anchor="middle" font-size="11" fill="#ccc">南</text></svg>
<svg style="left:975px;top:210px" width="84" height="44" ><rect x="27" y="4" width="31" height="31" fill="#9a9a9a" fill-opacity="0.82"/><text x="42.5" y="26" text-anchor="middle" font-size="14" fill="#6a6a6a">前</text><ellipse cx="42" cy="36" rx="36" ry="3.5" fill="none" stroke="#9a9a9a" stroke-width="1.5"/></svg>
<svg style="left:515px;top:631px" width="84" height="44" ><rect x="26" y="4" width="31" height="31" fill="#9a9a9a" fill-opacity="0.82"/><text x="41.5" y="26" text-anchor="middle" font-size="14" fill="#6a6a6a">左</text><ellipse cx="41" cy="36" rx="37" ry="3.5" fill="none" stroke="#9a9a9a" stroke-width="1.5"/></svg>
<svg style="left:970px;top:616px" width="100" height="80" ><ellipse cx="47.3" cy="53.2" rx="32.4" ry="15.8" fill="none" stroke="#8a8a8a" stroke-width="6"/><ellipse cx="47.3" cy="53.5" rx="29" ry="12.5" fill="none" stroke="#555" stroke-width="0.8"/><path d="M47.3 14L68 22.3V46L47.3 56.7L29 46.5L27 22.3z" fill="#8e8e8e"/><path d="M47.3 14L68 22.3L47.3 31L27 22.3z" fill="#949494"/><text x="38" y="48" text-anchor="middle" font-size="11" fill="#6e6e6e">左</text><text x="57" y="48" text-anchor="middle" font-size="11" fill="#6e6e6e">前</text></svg>
<div class="a" style="left:856px;top:270px;width:80px;height:33px;background:#474747"></div>
<div class="a" style="left:858px;top:274px;width:1px;height:26px;background-image:linear-gradient(#bbb 1px,transparent 1px);background-size:1px 2px"></div>
<div class="a" style="left:860px;top:275px;width:1px;height:26px;background-image:linear-gradient(#bbb 1px,transparent 1px);background-size:1px 2px"></div>
<div class="t" style="left:886px;top:281px;font-size:12.5px;color:#eee">贴图</div>
<svg style="left:150px;top:526px" width="60" height="50"><path d="M32.5 12L32.5 37" stroke="#000" stroke-width="1.1" fill="none"/><path d="M32.5 36.5L58 36.5" stroke="#c86a10" stroke-width="1.1" fill="none"/><text x="33" y="14" font-size="9.5" font-family="Liberation Sans" fill="#000">y</text><text x="33" y="38" font-size="9.5" font-family="Liberation Sans" fill="#1f4fd0">z</text><text x="58" y="38" font-size="9.5" font-family="Liberation Sans" fill="#c86a10">x</text></svg>
<svg style="left:610px;top:526px" width="60" height="50"><path d="M33.5 12L33.5 37" stroke="#1f4fd0" stroke-width="1.1" fill="none"/><path d="M33.5 36.5L59 36.5" stroke="#c86a10" stroke-width="1.1" fill="none"/><text x="34" y="13" font-size="9.5" font-family="Liberation Sans" fill="#1f4fd0">z</text><text x="34" y="38" font-size="9.5" font-family="Liberation Sans" fill="#000">y</text><text x="59" y="38" font-size="9.5" font-family="Liberation Sans" fill="#c86a10">x</text></svg>
<svg style="left:150px;top:946px" width="60" height="50"><path d="M32.5 14L32.5 39" stroke="#1f4fd0" stroke-width="1.1" fill="none"/><path d="M8 38.5L32.5 38.5" stroke="#000" stroke-width="1.1" fill="none"/><text x="33" y="16" font-size="9.5" font-family="Liberation Sans" fill="#1f4fd0">z</text><text x="9" y="41" font-size="9.5" font-family="Liberation Sans" fill="#000">y</text><text x="33" y="41" font-size="9.5" font-family="Liberation Sans" fill="#c86a10">x</text></svg>
<svg style="left:610px;top:946px" width="60" height="50"><path d="M34 38.5L34 13" stroke="#1f4fd0" stroke-width="1.1" fill="none"/><path d="M34 38.5L18 30" stroke="#000" stroke-width="1.1" fill="none"/><path d="M34 38.5L56 28.5" stroke="#c86a10" stroke-width="1.1" fill="none"/><text x="35" y="16" font-size="9.5" font-family="Liberation Sans" fill="#1f4fd0">z</text><text x="17" y="31" font-size="9.5" font-family="Liberation Sans" fill="#000">y</text><text x="54" y="31" font-size="9.5" font-family="Liberation Sans" fill="#c86a10">x</text></svg>
<div class="a" style="left:1080px;top:175px;width:206px;height:1px;background-image:linear-gradient(90deg,#bdbdbd 1px,transparent 1px);background-size:2px 1px"></div>
<div class="a" style="left:1081px;top:177px;width:205px;height:1px;background-image:linear-gradient(90deg,#bdbdbd 1px,transparent 1px);background-size:2px 1px"></div>
<div class="a" style="left:1078px;top:182px;width:208px;height:28px;background:#383838"></div>
<div class="a" style="left:1079px;top:182px;width:30px;height:28px;background:#444;border-left:1px solid #3e3e3e"></div>
<div class="a" style="left:1141px;top:186px;width:1px;height:18px;background:#2c2c2c"></div>
<div class="a" style="left:1173px;top:186px;width:1px;height:18px;background:#2c2c2c"></div>
<div class="a" style="left:1205px;top:186px;width:1px;height:18px;background:#2c2c2c"></div>
<div class="a" style="left:1237px;top:186px;width:1px;height:18px;background:#2c2c2c"></div>
<div class="a" style="left:1269px;top:186px;width:1px;height:18px;background:#2c2c2c"></div>
<svg style="left:1085px;top:185px" width="20" height="20" ><path d="M9.5 2v16M1.5 10h16" stroke="#eee" stroke-width="2.4"/></svg>
<svg style="left:1117px;top:187px" width="18" height="18" ><path d="M3 15q0-10 11-11" fill="none" stroke="#aaa" stroke-width="2"/><g fill="none" stroke="#3b8fc0" stroke-width="1"><rect x="0.5" y="0.5" width="3" height="3"/><rect x="14.5" y="0.5" width="3" height="3"/><rect x="0.5" y="14.5" width="3" height="3"/><rect x="14.5" y="14.5" width="3" height="3"/><path d="M5 2h8M5 16h8M2 5v8M16 5v8" stroke-dasharray="2 1.5"/></g></svg>
<svg style="left:1149px;top:187px" width="18" height="18" ><rect x="1" y="0" width="13" height="6" fill="#aaa"/><path d="M7.5 6v3M2 9h11M2 9v5M13 9v5" stroke="#3b8fc0" stroke-width="1" fill="none"/><rect x="0" y="13" width="4" height="4" fill="#3b8fc0"/><rect x="11" y="13" width="4" height="4" fill="#3b8fc0"/></svg>
<svg style="left:1180px;top:186px" width="22" height="20" ><circle cx="12" cy="10" r="8" fill="#aaa"/><path d="M5 3a9 9 0 0 0 0 14M2.5 4a9 9 0 0 0 0 12" fill="none" stroke="#3b8fc0" stroke-width="1"/></svg>
<svg style="left:1213px;top:186px" width="18" height="16" ><rect x="1" y="1" width="16" height="10" fill="#aaa"/><path d="M5 14h8" stroke="#aaa" stroke-width="1.5"/></svg>
<svg style="left:1245px;top:186px" width="20" height="20" ><path d="M6.5 6.5L16 16" stroke="#aaa" stroke-width="2.6" stroke-linecap="round"/><path d="M1.2 4.5a4.5 4.5 0 0 0 6.5 3.5L9 6.5a4.5 4.5 0 0 0-4-5.5l-0.5 0.3 2 2.2-1.5 2-2.6-1.5z" fill="#aaa"/><circle cx="16" cy="16" r="1.6" fill="#aaa"/></svg>
<div class="a" style="left:1081px;top:215px;width:24px;height:24px;border-radius:3px;background:#5b8fd4"></div>
<svg style="left:1085px;top:219px" width="16" height="16" ><circle cx="8" cy="8" r="7.5" fill="#d8d8d8" stroke="#333" stroke-width="0.8"/></svg>
<svg style="left:1111px;top:219px" width="16" height="16" ><circle cx="6" cy="6" r="5" fill="#ccc" stroke="#333" stroke-width="0.7"/><rect x="6" y="6" width="9" height="9" fill="#ccc" stroke="#333" stroke-width="0.7"/></svg>
<svg style="left:1139px;top:218px" width="12" height="18" ><path d="M6 0a5.5 5.5 0 0 1 3 10v2h-6v-2a5.5 5.5 0 0 1 3-10z" fill="#ccc"/><path d="M3 14h6M3 16h6" stroke="#ccc"/></svg>
<svg style="left:1163px;top:220px" width="16" height="14" ><rect x="0" y="1" width="11" height="11" rx="1" fill="#ccc"/><path d="M11 6l5-4v10z" fill="#ccc"/></svg>
<svg style="left:1189px;top:219px" width="16" height="16" ><path d="M1 1v14h14z" fill="#ccc"/><path d="M5 8v4h4z" fill="#444"/></svg>
<svg style="left:1215px;top:219px" width="16" height="16" ><g fill="none" stroke="#ccc" stroke-width="1.5"><path d="M1 3q3-2 7 0t7 0"/><path d="M1 8q3-2 7 0t7 0"/><path d="M1 13q3-2 7 0t7 0"/></g></svg>
<svg style="left:1242px;top:218px" width="16" height="16" ><circle cx="4.5" cy="4.5" r="3" fill="none" stroke="#ccc" stroke-width="2"/><circle cx="10.5" cy="10.5" r="4" fill="none" stroke="#ccc" stroke-width="2.2"/></svg>
<div class="a" style="left:1081px;top:245px;width:204px;height:20px;background:#5e5e5e"></div>
<div class="t" style="left:1086px;top:250px;font-size:12px;color:#eee">标准基本体</div>
<svg style="left:1271px;top:252px" width="8" height="5" ><path d="M0 0h8L4 5z" fill="#eee"/></svg>
<div class="a" style="left:1278px;top:266px;width:8px;height:747px;background:#3a3a3a;border-radius:3px"></div>
<div class="a" style="left:1081px;top:271px;width:195px;height:197px;background:#454545;border:1px solid #3a3a3a;border-radius:2px"></div>
<svg style="left:1087px;top:276px" width="8" height="6" ><path d="M0 0h7L3.5 5z" fill="#ccc"/></svg>
<div class="t" style="left:1099px;top:274px;font-size:12.5px;font-weight:bold;color:#f2f2f2">对象类型</div>
<div class="a" style="left:1261px;top:279px;width:7px;height:7px;background-image:radial-gradient(#999 0.6px,transparent 0.7px);background-size:2.3px 2.3px"></div>
<div class="a" style="left:1145px;top:298px;width:13px;height:13px;background:#414141;border:1px solid #3a3a3a"></div>
<div class="t" style="left:1162px;top:298px;font-size:12.5px;color:#8a8a8a">自动栅格</div>
<div class="a" style="left:1086px;top:318px;width:90px;height:20px;background:#5b5b5b;border-radius:3px"></div>
<div class="t" style="left:1086px;width:90px;text-align:center;top:322px;font-size:12.5px;color:#eee">长方体</div>
<div class="a" style="left:1181px;top:318px;width:89px;height:20px;background:#5b5b5b;border-radius:3px"></div>
<div class="t" style="left:1181px;width:89px;text-align:center;top:322px;font-size:12.5px;color:#eee">圆锥体</div>
<div class="a" style="left:1086px;top:343px;width:90px;height:20px;background:#5b5b5b;border-radius:3px"></div>
<div class="t" style="left:1086px;width:90px;text-align:center;top:347px;font-size:12.5px;color:#eee">球体</div>
<div class="a" style="left:1181px;top:343px;width:89px;height:20px;background:#5b5b5b;border-radius:3px"></div>
<div class="t" style="left:1181px;width:89px;text-align:center;top:347px;font-size:12.5px;color:#eee">几何球体</div>
<div class="a" style="left:1086px;top:368px;width:90px;height:20px;background:#5b5b5b;border-radius:3px"></div>
<div class="t" style="left:1086px;width:90px;text-align:center;top:372px;font-size:12.5px;color:#eee">圆柱体</div>
<div class="a" style="left:1181px;top:368px;width:89px;height:20px;background:#5b5b5b;border-radius:3px"></div>
<div class="t" style="left:1181px;width:89px;text-align:center;top:372px;font-size:12.5px;color:#eee">管状体</div>
<div class="a" style="left:1086px;top:393px;width:90px;height:20px;background:#5b5b5b;border-radius:3px"></div>
<div class="t" style="left:1086px;width:90px;text-align:center;top:397px;font-size:12.5px;color:#eee">圆环</div>
<div class="a" style="left:1181px;top:393px;width:89px;height:20px;background:#5b5b5b;border-radius:3px"></div>
<div class="t" style="left:1181px;width:89px;text-align:center;top:397px;font-size:12.5px;color:#eee">四棱锥</div>
<div class="a" style="left:1086px;top:418px;width:90px;height:20px;background:#5b5b5b;border-radius:3px"></div>
<div class="t" style="left:1086px;width:90px;text-align:center;top:422px;font-size:12.5px;color:#eee">茶壶</div>
<div class="a" style="left:1181px;top:418px;width:89px;height:20px;background:#5b5b5b;border-radius:3px"></div>
<div class="t" style="left:1181px;width:89px;text-align:center;top:422px;font-size:12.5px;color:#eee">平面</div>
<div class="a" style="left:1086px;top:443px;width:90px;height:20px;background:#5b5b5b;border-radius:3px"></div>
<div class="t" style="left:1086px;width:90px;text-align:center;top:447px;font-size:12.5px;color:#eee">加强型文本</div>
<div class="a" style="left:1081px;top:472px;width:195px;height:48px;background:#454545;border:1px solid #3a3a3a;border-radius:2px"></div>
<svg style="left:1087px;top:477px" width="8" height="6" ><path d="M0 0h7L3.5 5z" fill="#ccc"/></svg>
<div class="t" style="left:1099px;top:475px;font-size:12.5px;font-weight:bold;color:#f2f2f2">名称和颜色</div>
<div class="a" style="left:1261px;top:480px;width:7px;height:7px;background-image:radial-gradient(#999 0.6px,transparent 0.7px);background-size:2.3px 2.3px"></div>
<div class="a" style="left:1086px;top:494px;width:159px;height:21px;background:#4a4a4a;border:1px solid #3a3a3a"></div>
<div class="a" style="left:1250px;top:494px;width:20px;height:21px;background:#c0606f;border:1px solid #111"></div>
</div>
<div class="a" style="left:1288px;top:21px;width:333px;height:1002px;background:#fdfdfd">
<div class="a" style="left:0;top:0;width:333px;height:40px;background:#e8e8e8"></div>
<div class="a" style="left:0;top:9px;width:92px;height:31px;background:#f4f4f4;border-top-right-radius:7px"></div>
<svg style="left:63px;top:18px" width="12" height="12"><path d="M1 1l10 10M11 1l-10 10" stroke="#222" stroke-width="1.1"/></svg>
<svg style="left:107px;top:18px" width="12" height="12"><path d="M6 0v12M0 6h12" stroke="#333" stroke-width="1.1"/></svg>
<div class="a" style="left:0;top:40px;width:333px;height:47px;background:#f4f4f4;border-bottom:1px solid #e2e2e2"></div>
<svg style="left:8px;top:57px" width="14" height="14"><path d="M12 7a5 5 0 1 1-1.5-3.6" fill="none" stroke="#444" stroke-width="1.2"/><path d="M11 0.5v3.5h-3.5" fill="none" stroke="#444" stroke-width="1.2"/></svg>
<div class="a" style="left:43px;top:48px;width:300px;height:32px;background:#fcfcfc;border-radius:5px"></div>
<svg style="left:57px;top:56px" width="16" height="16"><rect x="0.5" y="0.5" width="14" height="11" rx="1.5" fill="none" stroke="#333" stroke-width="1"/><path d="M5 14h5" stroke="#333"/></svg>
<div class="t" style="left:95px;top:54px;font-size:17px;color:#333">&#8250;</div>
<div class="t" style="left:165px;top:54px;font-size:17px;color:#333">&#8250;</div>
<div class="t" style="left:236px;top:54px;font-size:17px;color:#333">&#8250;</div>
<div class="t" style="left:310px;top:54px;font-size:17px;color:#333">&#8250;</div>
<div class="t" style="left:117px;top:57px;font-size:13.5px;color:#1a1a1a">桌面</div>
<div class="t" style="left:187px;top:57px;font-size:13.5px;color:#1a1a1a">1130</div>
<div class="t" style="left:259px;top:57px;font-size:13.5px;color:#1a1a1a">1201</div>
<div class="a" style="left:0;top:88px;width:333px;height:54px;background:#f9f9f9;border-bottom:1px solid #e0e0e0"></div>
<svg style="left:9px;top:108px" width="16" height="16"><rect x="4.5" y="0.5" width="10" height="10" rx="2" fill="none" stroke="#2a6fc4"/><path d="M2.5 4.5v8a2 2 0 0 0 2 2h7" fill="none" stroke="#333"/></svg>
<svg style="left:57px;top:107px" width="16" height="18"><path d="M1 3h10v14h-10z" fill="none" stroke="#aaa"/><rect x="6.5" y="6.5" width="8" height="10" rx="1" fill="#fff" stroke="#8cc0f0"/></svg>
<svg style="left:104px;top:107px" width="18" height="18"><rect x="0.5" y="3.5" width="16" height="10" rx="2" fill="none" stroke="#333"/><text x="3" y="12.5" font-size="9" font-family="Liberation Sans" fill="#2a6fc4">A</text><path d="M11 1v16M9 1h4M9 17h4" stroke="#2a6fc4"/></svg>
<svg style="left:152px;top:107px" width="18" height="18"><path d="M6 4h-4v11h12v-4" fill="none" stroke="#333"/><path d="M6 11q1-6 8-6V2l4 4-4 4V7q-5 0-8 4z" fill="none" stroke="#2a6fc4"/></svg>
<svg style="left:200px;top:107px" width="16" height="18"><path d="M1 3.5h14M5.5 3V1h5v2M3 4l1 12h8l1-12M6.5 7v6M9.5 7v6" fill="none" stroke="#333"/></svg>
<div class="a" style="left:235px;top:100px;width:1px;height:32px;background:#e0e0e0"></div>
<svg style="left:250px;top:108px" width="18" height="16"><path d="M4.5 15V1M1 4.5l3.5-3.5 3.5 3.5" fill="none" stroke="#333"/><path d="M12.5 1v14M9 11.5l3.5 3.5 3.5-3.5" fill="none" stroke="#2a6fc4"/></svg>
<div class="t" style="left:275px;top:109px;font-size:12.5px;color:#1a1a1a">排序</div>
<svg style="left:304px;top:114px" width="8" height="5"><path d="M0.5 0.5l3.5 3.5 3.5-3.5" fill="none" stroke="#666"/></svg>
<svg style="left:146px;top:141px" width="10" height="6"><path d="M0.5 5l4.5-4.5 4.5 4.5" fill="none" stroke="#555"/></svg>
<div class="t" style="left:33px;top:152px;font-size:12.5px;color:#4a4a4a">名称</div>
<div class="a" style="left:274px;top:143px;width:1px;height:40px;background:#e5e5e5"></div>
<div class="t" style="left:281px;top:152px;font-size:12.5px;color:#4a4a4a">修改日期</div>
<svg style="left:21px;top:181px" width="18" height="16"><path d="M0.6 3.5q0-1.2 1.2-1.2h3l1 1h8.5v10.8h-13.7z" fill="#fbe3a0" stroke="#c8901e" stroke-width="0.9"/><path d="M0.6 13.5h13.6" stroke="#222" stroke-width="1.2"/><rect x="6.3" y="0.6" width="9.6" height="9.3" fill="#fff" stroke="#1b1660" stroke-width="1.3"/><text x="8.4" y="8.6" font-size="8.5" font-weight="bold" font-family="Liberation Sans" fill="#1b1660">7</text></svg>
<div class="t" style="left:41px;top:184px;font-size:12.5px;color:#1a1a1a">A_objs230523391.7z</div>
<div class="t" style="left:281px;top:184px;font-size:12.5px;color:#5e5e5e">2023/12/</div>
<svg style="left:21px;top:212px" width="17" height="17"><path d="M0.6 2q0-1.4 1.4-1.4h9.2l4.6 4.6v10.8h-15.2z" fill="#f2f8fb" stroke="#3d6786" stroke-width="1.1"/><rect x="0.6" y="9" width="15.2" height="7" fill="#3d6786"/><text x="1.6" y="15" font-size="6" font-weight="bold" font-family="Liberation Sans" fill="#fff">MAX</text></svg>
<div class="t" style="left:41px;top:215px;font-size:12.5px;color:#1a1a1a">A_objs230523391.max</div>
<div class="t" style="left:281px;top:215px;font-size:12.5px;color:#5e5e5e">2023/12/</div>
<svg style="left:21px;top:243px" width="18" height="16"><path d="M0.6 3.5q0-1.2 1.2-1.2h3l1 1h8.5v10.8h-13.7z" fill="#fbe3a0" stroke="#c8901e" stroke-width="0.9"/><path d="M0.6 13.5h13.6" stroke="#222" stroke-width="1.2"/><rect x="6.3" y="0.6" width="9.6" height="9.3" fill="#fff" stroke="#1b1660" stroke-width="1.3"/><text x="8.4" y="8.6" font-size="8.5" font-weight="bold" font-family="Liberation Sans" fill="#1b1660">7</text></svg>
<div class="t" style="left:41px;top:246px;font-size:12.5px;color:#1a1a1a">A_objs2305231650.7z</div>
<div class="t" style="left:281px;top:246px;font-size:12.5px;color:#5e5e5e">2023/12/</div>
<svg style="left:21px;top:274px" width="17" height="17"><path d="M0.6 2q0-1.4 1.4-1.4h9.2l4.6 4.6v10.8h-15.2z" fill="#f2f8fb" stroke="#3d6786" stroke-width="1.1"/><rect x="0.6" y="9" width="15.2" height="7" fill="#3d6786"/><text x="1.6" y="15" font-size="6" font-weight="bold" font-family="Liberation Sans" fill="#fff">MAX</text></svg>
<div class="t" style="left:41px;top:277px;font-size:12.5px;color:#1a1a1a">A_objs2305231650.max</div>
<div class="t" style="left:281px;top:277px;font-size:12.5px;color:#5e5e5e">2023/12/</div>
<svg style="left:21px;top:305px" width="18" height="16"><path d="M0.6 3.5q0-1.2 1.2-1.2h3l1 1h8.5v10.8h-13.7z" fill="#fbe3a0" stroke="#c8901e" stroke-width="0.9"/><path d="M0.6 13.5h13.6" stroke="#222" stroke-width="1.2"/><rect x="6.3" y="0.6" width="9.6" height="9.3" fill="#fff" stroke="#1b1660" stroke-width="1.3"/><text x="8.4" y="8.6" font-size="8.5" font-weight="bold" font-family="Liberation Sans" fill="#1b1660">7</text></svg>
<div class="t" style="left:41px;top:308px;font-size:12.5px;color:#1a1a1a">A_objs2305232678.7z</div>
<div class="t" style="left:281px;top:308px;font-size:12.5px;color:#5e5e5e">2023/12/</div>
<svg style="left:21px;top:336px" width="17" height="17"><path d="M0.6 2q0-1.4 1.4-1.4h9.2l4.6 4.6v10.8h-15.2z" fill="#f2f8fb" stroke="#3d6786" stroke-width="1.1"/><rect x="0.6" y="9" width="15.2" height="7" fill="#3d6786"/><text x="1.6" y="15" font-size="6" font-weight="bold" font-family="Liberation Sans" fill="#fff">MAX</text></svg>
<div class="t" style="left:41px;top:339px;font-size:12.5px;color:#1a1a1a">A_objs2305232678.max</div>
<div class="t" style="left:281px;top:339px;font-size:12.5px;color:#5e5e5e">2023/12/</div>
<svg style="left:21px;top:367px" width="18" height="16"><path d="M0.6 3.5q0-1.2 1.2-1.2h3l1 1h8.5v10.8h-13.7z" fill="#fbe3a0" stroke="#c8901e" stroke-width="0.9"/><path d="M0.6 13.5h13.6" stroke="#222" stroke-width="1.2"/><rect x="6.3" y="0.6" width="9.6" height="9.3" fill="#fff" stroke="#1b1660" stroke-width="1.3"/><text x="8.4" y="8.6" font-size="8.5" font-weight="bold" font-family="Liberation Sans" fill="#1b1660">7</text></svg>
<div class="t" style="left:41px;top:370px;font-size:12.5px;color:#1a1a1a">A_objs2305233091.7z</div>
<div class="t" style="left:281px;top:370px;font-size:12.5px;color:#5e5e5e">2023/12/</div>
<svg style="left:21px;top:398px" width="17" height="17"><path d="M0.6 2q0-1.4 1.4-1.4h9.2l4.6 4.6v10.8h-15.2z" fill="#f2f8fb" stroke="#3d6786" stroke-width="1.1"/><rect x="0.6" y="9" width="15.2" height="7" fill="#3d6786"/><text x="1.6" y="15" font-size="6" font-weight="bold" font-family="Liberation Sans" fill="#fff">MAX</text></svg>
<div class="t" style="left:41px;top:401px;font-size:12.5px;color:#1a1a1a">A_objs2305233091.max</div>
<div class="t" style="left:281px;top:401px;font-size:12.5px;color:#5e5e5e">2023/12/</div>
<svg style="left:21px;top:429px" width="18" height="16"><path d="M0.6 3.5q0-1.2 1.2-1.2h3l1 1h8.5v10.8h-13.7z" fill="#fbe3a0" stroke="#c8901e" stroke-width="0.9"/><path d="M0.6 13.5h13.6" stroke="#222" stroke-width="1.2"/><rect x="6.3" y="0.6" width="9.6" height="9.3" fill="#fff" stroke="#1b1660" stroke-width="1.3"/><text x="8.4" y="8.6" font-size="8.5" font-weight="bold" font-family="Liberation Sans" fill="#1b1660">7</text></svg>
<div class="t" style="left:41px;top:432px;font-size:12.5px;color:#1a1a1a">A_objs2305233154.7z</div>
<div class="t" style="left:281px;top:432px;font-size:12.5px;color:#5e5e5e">2023/12/</div>
<svg style="left:21px;top:460px" width="17" height="17"><path d="M0.6 2q0-1.4 1.4-1.4h9.2l4.6 4.6v10.8h-15.2z" fill="#f2f8fb" stroke="#3d6786" stroke-width="1.1"/><rect x="0.6" y="9" width="15.2" height="7" fill="#3d6786"/><text x="1.6" y="15" font-size="6" font-weight="bold" font-family="Liberation Sans" fill="#fff">MAX</text></svg>
<div class="t" style="left:41px;top:463px;font-size:12.5px;color:#1a1a1a">A_objs2305233154.max</div>
<div class="t" style="left:281px;top:463px;font-size:12.5px;color:#5e5e5e">2023/12/</div>
<svg style="left:21px;top:491px" width="18" height="16"><path d="M0.6 3.5q0-1.2 1.2-1.2h3l1 1h8.5v10.8h-13.7z" fill="#fbe3a0" stroke="#c8901e" stroke-width="0.9"/><path d="M0.6 13.5h13.6" stroke="#222" stroke-width="1.2"/><rect x="6.3" y="0.6" width="9.6" height="9.3" fill="#fff" stroke="#1b1660" stroke-width="1.3"/><text x="8.4" y="8.6" font-size="8.5" font-weight="bold" font-family="Liberation Sans" fill="#1b1660">7</text></svg>
<div class="t" style="left:41px;top:494px;font-size:12.5px;color:#1a1a1a">A_objs2305233876.7z</div>
<div class="t" style="left:281px;top:494px;font-size:12.5px;color:#5e5e5e">2023/12/</div>
<svg style="left:21px;top:522px" width="17" height="17"><path d="M0.6 2q0-1.4 1.4-1.4h9.2l4.6 4.6v10.8h-15.2z" fill="#f2f8fb" stroke="#3d6786" stroke-width="1.1"/><rect x="0.6" y="9" width="15.2" height="7" fill="#3d6786"/><text x="1.6" y="15" font-size="6" font-weight="bold" font-family="Liberation Sans" fill="#fff">MAX</text></svg>
<div class="t" style="left:41px;top:525px;font-size:12.5px;color:#1a1a1a">A_objs2305233876.max</div>
<div class="t" style="left:281px;top:525px;font-size:12.5px;color:#5e5e5e">2023/12/</div>
<div class="a" style="left:17px;top:548px;width:330px;height:27px;background:#dcdcdc;border-radius:4px"></div>
<svg style="left:22px;top:553px" width="15" height="17"><path d="M0.5 0.5h9l4 4v12h-13z" fill="#fff" stroke="#777"/><path d="M9.5 0.5v4h4" fill="none" stroke="#777"/></svg>
<div class="t" style="left:41px;top:556px;font-size:12.5px;color:#1a1a1a">贴图管理.mzp</div>
<div class="t" style="left:281px;top:556px;font-size:12.5px;color:#5e5e5e">2023/12/</div>
<div class="a" style="left:0;top:40px;width:40px;height:962px;background:linear-gradient(90deg,rgba(0,0,0,0.1),rgba(0,0,0,0.035) 40%,rgba(0,0,0,0))"></div>
</div></body></html>
